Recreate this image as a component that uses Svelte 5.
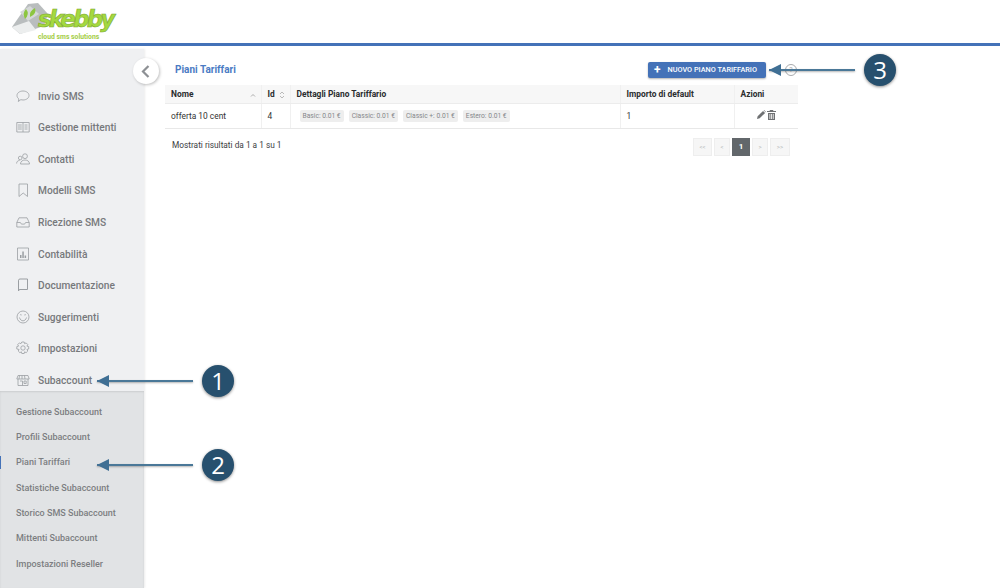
<script>
  const menu = [
    { label: "Invio SMS", icon: "chat" },
    { label: "Gestione mittenti", icon: "card" },
    { label: "Contatti", icon: "people" },
    { label: "Modelli SMS", icon: "bookmark" },
    { label: "Ricezione SMS", icon: "inbox" },
    { label: "Contabilità", icon: "chart" },
    { label: "Documentazione", icon: "book" },
    { label: "Suggerimenti", icon: "smile" },
    { label: "Impostazioni", icon: "gear" },
    { label: "Subaccount", icon: "shop" }
  ];

  const submenu = [
    "Gestione Subaccount",
    "Profili Subaccount",
    "Piani Tariffari",
    "Statistiche Subaccount",
    "Storico SMS Subaccount",
    "Mittenti Subaccount",
    "Impostazioni Reseller"
  ];

  const prices = ["Basic: 0.01 €", "Classic: 0.01 €", "Classic +: 0.01 €", "Estero: 0.01 €"];
  const pages = ["<<", "<", "1", ">", ">>"];
</script>

<header class="header">
  <div class="logo">
    <svg class="envelope" width="38" height="32" viewBox="0 0 38 32">
      <path d="M0 25 L16 2 L26 1 L36 12 L32 24 L8 32 Z" fill="#b9bdbe" />
      <path d="M0 25 L17 19 L24 28 L8 32 Z" fill="#eceeee" />
      <path d="M16 19 L8 10 L18 4 L27 12 Z" fill="#d5d8d8" />
      <path d="M13 17 q-3 -6 1 -10 q4 5 -1 10 Z M18 15 q-1 -6 5 -9 q2 6 -5 9 Z" fill="#8cc63f" />
    </svg>
    <div class="brand">
      <span class="brand-name">skebby</span>
      <span class="brand-tag">cloud sms solutions</span>
    </div>
  </div>
</header>

<div class="page">
  <aside class="sidebar">
    <nav class="menu">
      {#each menu as item}
        <div class="menu-item">
          <svg class="icon" width="14" height="14" viewBox="0 0 14 14" fill="none" stroke="#9a9ea2" stroke-width="0.8">
            {#if item.icon === "chat"}
              <path d="M1 6.500c0-2.600 2.700-4.500 6-4.500s6 1.900 6 4.500-2.700 4.500-6 4.500c-.8 0-1.500-.1-2.200-.3L2.300 12.500l.6-2.500C1.700 9.100 1 7.900 1 6.500z" />
            {:else if item.icon === "card"}
              <path d="M.8 2.500h12.400v9.500H.8zM7 2.500v9.500M2 5h3.800M2 7h3.800M2 9h3.800M8.500 5h3M8.500 9h3M8.500 7h3" />
            {:else if item.icon === "people"}
              <circle cx="9" cy="4.200" r="2.400" />
              <circle cx="4.200" cy="6" r="1.800" />
              <path d="M4.500 12c0-2.500 2-4 4.500-4s4.500 1.500 4.500 4zM.6 11.500c0-1.800 1.200-3 3-3" />
            {:else if item.icon === "bookmark"}
              <path d="M3 1h8.500v12.500L7.200 10 3 13.500z" />
            {:else if item.icon === "inbox"}
              <path d="M.8 7.500 3 2.800h8l2.200 4.700V12H.8zM.8 7.500h3.600l1 1.600h3.200l1-1.600h3.600" />
            {:else if item.icon === "chart"}
              <path d="M1.500 1h11v12h-11z" />
              <path d="M4 11V8h1.500v3zM6.300 11V4.500h1.500V11zM8.600 11V8.500h1.500V11z" fill="#9a9ea2" stroke="none" />
            {:else if item.icon === "book"}
              <path d="M2.500 2.500a1.500 1.500 0 0 1 1.500-1.500h7.500v10.500H4a1.500 1.500 0 0 0-1.500 1.500zM2.500 2.500v10.500" stroke-width="1" />
            {:else if item.icon === "smile"}
              <circle cx="7" cy="7" r="6" />
              <path d="M3.500 7.500c.6 2.200 2 3.300 3.500 3.300s2.900-1.100 3.500-3.300M4 5.200c.5-.7 1.200-.7 1.700 0M8.300 5.200c.5-.7 1.200-.7 1.700 0" />
            {:else if item.icon === "gear"}
              <circle cx="7" cy="7" r="2.200" />
              <path d="M5.800 1h2.400l.4 1.700 1.500-.8 1.700 1.700-.9 1.500 1.800.5v2.400l-1.800.5.900 1.500-1.700 1.700-1.500-.9-.4 1.700H5.800l-.4-1.700-1.500.9-1.700-1.700.9-1.500L.8 8V5.600l1.800-.5-.9-1.500 1.700-1.700 1.500.8z" />
            {:else}
              <path d="M2 2.500h10l1.200 3.500H.8zM2 6v6.500h10V6M3.500 2.500 3 6M6 2.500V6M8.500 2.500 9 6M4 8h2.500v4.500M8 8h2.200v2.500H8z" />
            {/if}
          </svg>
          <span>{item.label}</span>
        </div>
      {/each}
    </nav>
    <div class="submenu">
      {#each submenu as label}
        <div class="submenu-item" class:active={label === "Piani Tariffari"}>{label}</div>
      {/each}
    </div>
  </aside>

  <main class="content">
    <div class="title-row">
      <h1>Piani Tariffari</h1>
      <div class="actions">
        <button class="new-button"><span class="plus">+</span>NUOVO PIANO TARIFFARIO</button>
        <span class="help">?</span>
      </div>
    </div>

    <table>
      <thead>
        <tr>
          <th class="col-name">
            Nome
            <svg class="sort" width="6" height="8" viewBox="0 0 6 8" fill="none" stroke="#999" stroke-width="0.8"><path d="M1 5.500 3 3.500 5 5.500" /></svg>
          </th>
          <th class="col-id">
            Id
            <svg class="sort" width="6" height="8" viewBox="0 0 6 8" fill="none" stroke="#aaa" stroke-width="0.8"><path d="M1 3 3 1 5 3M1 5 3 7 5 5" /></svg>
          </th>
          <th class="col-details">Dettagli Piano Tariffario</th>
          <th class="col-amount">Importo di default</th>
          <th class="col-actions">Azioni</th>
        </tr>
      </thead>
      <tbody>
        <tr>
          <td>offerta 10 cent</td>
          <td>4</td>
          <td>
            <div class="prices">
              {#each prices as price}
                <span class="price">{price}</span>
              {/each}
            </div>
          </td>
          <td>1</td>
          <td>
            <div class="row-icons">
              <svg width="9" height="9" viewBox="0 0 10 10"><path d="M0 10l.7-3L6.700 1l2.300 2.300-6 6zM7.400.4l.5-.4 2.100 2.100-.5.5z" fill="#6f7173" /></svg>
              <svg width="9" height="10" viewBox="0 0 9 10"><path d="M3 0h3l.5 1H9v1H0V1h2.500zM1 3h7v7H1zM2.500 4v5h.8V4zM4.200 4v5H5V4zM5.800 4v5h.8V4z" fill="#6f7173" fill-rule="evenodd" /></svg>
            </div>
          </td>
        </tr>
      </tbody>
    </table>

    <div class="table-footer">
      <span class="summary">Mostrati risultati da 1 a 1 su 1</span>
      <div class="pagination">
        {#each pages as page}
          <span class="page-link" class:current={page === "1"}>{page}</span>
        {/each}
      </div>
    </div>
  </main>
</div>

<button class="collapse" aria-label="Chiudi menu">
  <svg width="9" height="13" viewBox="0 0 9 13" fill="none" stroke="#8d9094" stroke-width="2.200"><path d="M7.500 1 2 6.500 7.500 12" /></svg>
</button>

<div class="callout" style="left: 97px; top: 364px; width: 137px;">
  <span class="arrow-line"></span><span class="badge">1</span>
</div>
<div class="callout" style="left: 97px; top: 448px; width: 137px;">
  <span class="arrow-line"></span><span class="badge">2</span>
</div>
<div class="callout" style="left: 769px; top: 53px; width: 127px;">
  <span class="arrow-line"></span><span class="badge">3</span>
</div>

<style>
  :global(body) {
    background: #fff;
    font-family: Roboto, "Liberation Sans", sans-serif;
    color: #2f3133;
    overflow: hidden;
  }

  .header {
    height: 43px;
    border-bottom: 3px solid #4472b8;
  }

  .logo {
    display: flex;
    align-items: flex-start;
    padding: 2px 0 0 12px;
    height: 40px;
    box-sizing: border-box;
  }

  .brand {
    display: flex;
    flex-direction: column;
    margin: 4px 0 0 -12px;
  }

  .brand-name {
    font-family: "DejaVu Sans", sans-serif;
    font-size: 23px;
    font-weight: 700;
    font-style: italic;
    line-height: 27px;
    letter-spacing: -2.900px;
    color: #a4d93f;
    -webkit-text-stroke: 0.6px #7ea82e;
  }

  .brand-tag {
    font-size: 6.800px;
    font-weight: 700;
    line-height: 8px;
    color: #a4cd45;
  }

  .page {
    display: flex;
    height: 542px;
  }

  .sidebar {
    width: 144px;
    margin-top: 3px;
    flex-shrink: 0;
    display: flex;
    flex-direction: column;
    background: #eff0f2;
    box-shadow: 1px 0 2px rgba(0, 0, 0, 0.08);
  }

  .menu {
    padding: 22px 0 4px;
  }

  .menu-item {
    display: flex;
    align-items: flex-end;
    height: 31.600px;
    padding-left: 16px;
    gap: 8px;
    font-size: 10.200px;
    line-height: 12px;
    font-weight: 500;
    color: #77797c;
  }

  .submenu {
    flex: 1;
    padding-top: 8px;
    background: #e1e3e5;
    box-shadow: inset 0 1px 2px rgba(0, 0, 0, 0.1);
  }

  .submenu-item {
    position: relative;
    display: flex;
    align-items: center;
    height: 25.330px;
    padding-left: 16px;
    font-size: 9px;
    font-weight: 500;
    color: #7c7e81;
  }

  .submenu-item.active::before {
    content: "";
    position: absolute;
    left: 0;
    top: 6px;
    width: 1px;
    height: 13px;
    background: #4472b8;
  }

  .content {
    width: 633px;
    margin-left: 21px;
  }

  .title-row {
    display: flex;
    justify-content: space-between;
    align-items: center;
    height: 39px;
    padding-left: 10px;
  }

  h1 {
    margin: 7px 0 0;
    font-size: 10px;
    font-weight: 700;
    color: #4a7bc4;
  }

  .actions {
    display: flex;
    align-items: center;
    margin-top: 8px;
    gap: 19px;
    padding-right: 1px;
  }

  .new-button {
    display: flex;
    align-items: center;
    width: 118px;
    height: 16px;
    padding: 0 0 0 6px;
    border: 0;
    border-radius: 2px;
    background: #4472b8;
    box-shadow: 0 1px 2px rgba(0, 0, 0, 0.3);
    color: #fff;
    font-family: inherit;
    font-size: 7.300px;
    font-weight: 500;
    white-space: nowrap;
  }

  .plus {
    font-size: 12px;
    font-weight: 700;
    line-height: 12px;
    margin-right: 7px;
  }

  .help {
    width: 10px;
    height: 10px;
    border: 1px solid #a9abae;
    border-radius: 50%;
    color: #a9abae;
    font-size: 7px;
    line-height: 10px;
    text-align: center;
  }

  table {
    width: 633px;
    border-collapse: collapse;
    table-layout: fixed;
    font-size: 8.400px;
  }

  th,
  td {
    box-sizing: border-box;
    padding: 0 6px;
    border-right: 1px solid #f0f0f0;
  }

  th {
    position: relative;
    height: 18px;
    background: #f7f7f7;
    border-bottom: 1px solid #ececec;
    text-align: left;
    font-weight: 700;
    color: #2a2c2e;
  }

  td {
    height: 25px;
    border-bottom: 1px solid #e8e8e8;
    color: #333;
  }

  th:last-child,
  td:last-child {
    border-right: 0;
  }

  .col-name { width: 96px; }
  .col-id { width: 29px; }
  .col-details { width: 330px; }
  .col-amount { width: 114px; }

  .sort {
    position: absolute;
    right: 5px;
    top: 6px;
  }

  .prices {
    display: flex;
    gap: 5px;
    margin-left: 3px;
  }

  .price {
    padding: 2px 3px;
    border-radius: 2px;
    background: #eeeeee;
    font-size: 6.700px;
    color: #85878a;
    white-space: nowrap;
  }

  .row-icons {
    display: flex;
    justify-content: center;
    align-items: center;
    gap: 1px;
    margin: -1px 0 1px;
  }

  .table-footer {
    display: flex;
    justify-content: space-between;
    align-items: flex-start;
    width: 625px;
    margin-top: 9px;
    padding-left: 7px;
    box-sizing: border-box;
    font-size: 8.300px;
    color: #3b3d3f;
  }

  .summary {
    margin-top: 2px;
  }

  .pagination {
    display: flex;
    gap: 2px;
    background: #fff;
  }

  .page-link {
    display: flex;
    justify-content: center;
    align-items: center;
    flex: none;
    width: 16px;
    height: 18px;
    background: #f6f6f6;
    border: 1px solid #eeeeee;
    box-sizing: border-box;
    font-size: 6px;
    color: #b4b6b8;
  }

  .page-link:first-child {
    width: 19px;
  }

  .page-link:last-child {
    width: 20px;
  }

  .page-link.current {
    width: 18px;
    background: #62676b;
    border-color: #62676b;
    color: #fff;
    font-size: 8px;
    font-weight: 700;
  }

  .collapse {
    position: absolute;
    left: 133px;
    top: 58px;
    display: flex;
    justify-content: center;
    align-items: center;
    width: 26px;
    height: 26px;
    padding: 0 2px 0 0;
    border: 0;
    border-radius: 50%;
    background: #fff;
    box-shadow: 1px 1px 3px rgba(0, 0, 0, 0.25);
  }

  .callout {
    position: absolute;
    display: flex;
    align-items: center;
    justify-content: flex-end;
    height: 33px;
  }

  .arrow-line {
    position: relative;
    flex: 1;
    height: 2px;
    margin-right: 9px;
    background: #4a7898;
    box-shadow: 0 1px 2px rgba(0, 0, 0, 0.3);
  }

  .arrow-line::before {
    content: "";
    position: absolute;
    left: 0;
    top: -5px;
    border-top: 6px solid transparent;
    border-bottom: 6px solid transparent;
    border-right: 12px solid #3f6f94;
  }

  .badge {
    width: 32px;
    height: 32px;
    flex: none;
    border-radius: 50%;
    background: #27506e;
    box-shadow: 0 1px 3px rgba(0, 0, 0, 0.45);
    color: #fff;
    font-family: "Open Sans", sans-serif;
    font-size: 24px;
    line-height: 32px;
    text-align: center;
  }
</style>
